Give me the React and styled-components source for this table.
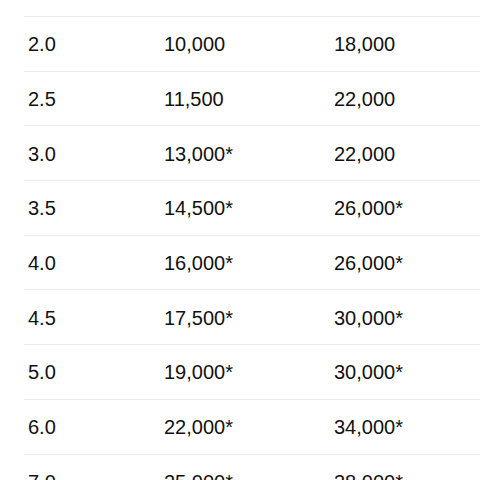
import React from "react";
import styled, { createGlobalStyle } from "styled-components";

const Global = createGlobalStyle`
  html, body { margin: 0; padding: 0; background: #ffffff; }
  body { font-family: "Liberation Sans", Arial, sans-serif; overflow: hidden; }
`;

const Page = styled.div`
  width: 480px;
  height: 480px;
  overflow: hidden;
  padding-left: 24px;
  box-sizing: border-box;
`;

const Table = styled.div`
  display: flex;
  flex-direction: column;
  width: 520px;
`;

const HeaderStub = styled.div`
  height: 17px;
  border-bottom: 1px solid #ebebeb;
  box-sizing: border-box;
`;

const Row = styled.div`
  display: grid;
  grid-template-columns: 136px 170px 1fr;
  align-items: center;
  height: 54.7px;
  border-bottom: 1px solid #ebebeb;
  box-sizing: border-box;
  padding-top: 1px;
`;

const Cell = styled.div`
  padding-left: 4px;
  font-size: 20px;
  line-height: 24px;
  color: #111111;
  white-space: nowrap;
`;

const rows = [
  ["2.0", "10,000", "18,000"],
  ["2.5", "11,500", "22,000"],
  ["3.0", "13,000*", "22,000"],
  ["3.5", "14,500*", "26,000*"],
  ["4.0", "16,000*", "26,000*"],
  ["4.5", "17,500*", "30,000*"],
  ["5.0", "19,000*", "30,000*"],
  ["6.0", "22,000*", "34,000*"],
  ["7.0", "25,000*", "38,000*"],
];

export default function App() {
  return (
    <>
      <Global />
      <Page>
        <Table>
          <HeaderStub />
          {rows.map((r) => (
            <Row key={r[0]}>
              {r.map((c, i) => (
                <Cell key={i}>{c}</Cell>
              ))}
            </Row>
          ))}
        </Table>
      </Page>
    </>
  );
}
